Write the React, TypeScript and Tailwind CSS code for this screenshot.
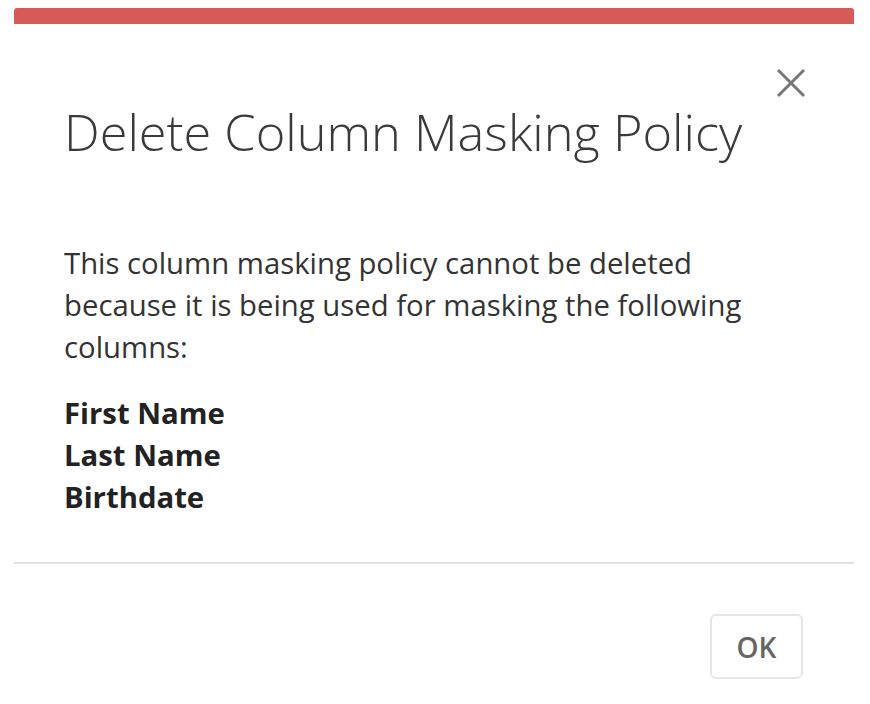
export default function App() {
  return (
    <div className="min-h-[704px] bg-white pt-[8px] font-['Open_Sans',sans-serif]">
      <div className="ml-[14px] w-[840px]">
        <div className="h-[16px] rounded-t-[3px] bg-[#d65b57]" />
        <div className="relative">
          <button
            type="button"
            aria-label="Close"
            className="absolute right-[48px] top-[44px] h-[30px] w-[30px]"
          >
            <svg viewBox="0 0 30 30" className="h-[30px] w-[30px]">
              <path
                d="M2 2 L28 28 M28 2 L2 28"
                stroke="#777"
                strokeWidth="3"
                fill="none"
              />
            </svg>
          </button>

          <div className="px-[50px] pt-[77px] pb-[44px]">
            <h2 className="text-[50.5px] font-light leading-[62px] text-[#3a3a3a]">
              Delete Column Masking Policy
            </h2>
            <p className="mt-[79px] text-[29.3px] leading-[42px] text-[#333]">
              This column masking policy cannot be deleted because it is being
              used for masking the following columns:
            </p>
            <ul className="mt-[24px] text-[29.3px] font-bold leading-[42px] text-[#222]">
              <li>First Name</li>
              <li>Last Name</li>
              <li>Birthdate</li>
            </ul>
          </div>

          <div className="h-[2px] bg-[#e2e2e2]" />

          <div className="flex justify-end pt-[50px] pr-[51px]">
            <button
              type="button"
              className="flex h-[65px] w-[93px] items-center justify-center rounded-[6px] border-2 border-[#e6e6e6] bg-white text-[28px] font-semibold text-[#666]"
            >
              OK
            </button>
          </div>
        </div>
      </div>
    </div>
  )
}
